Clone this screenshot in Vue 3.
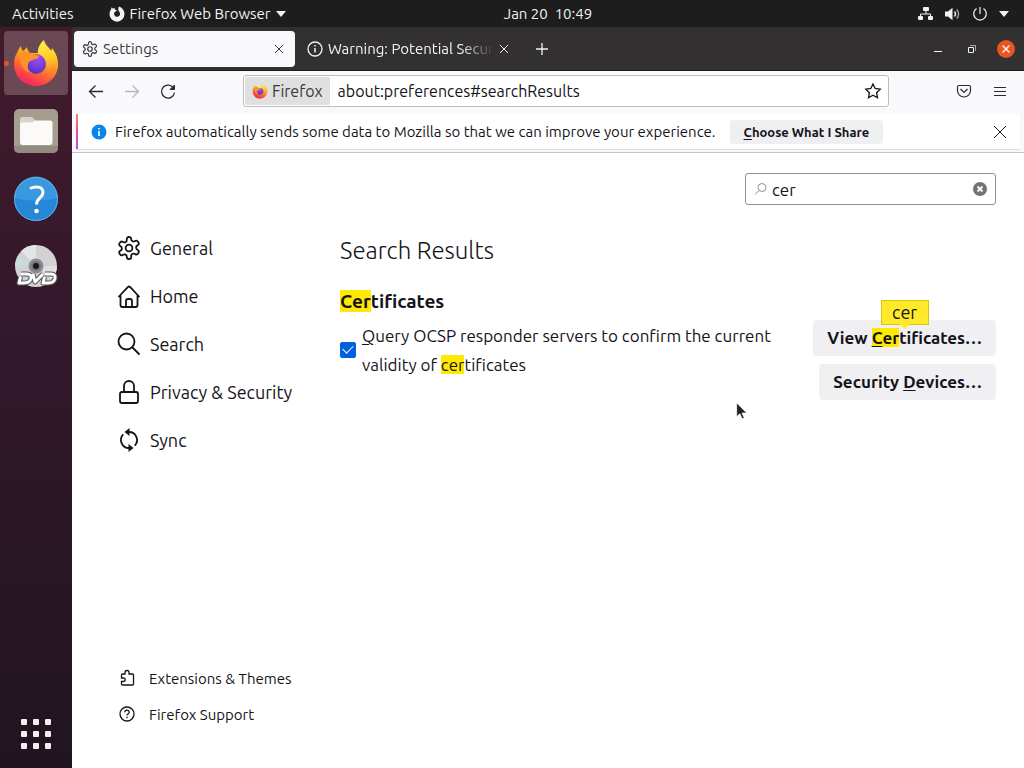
<template>
  <div class="desktop">
    <!-- Shared icon shapes -->
    <svg class="defs" width="0" height="0" aria-hidden="true">
      <defs>
        <linearGradient id="fx-body" x1="0.8" y1="0.1" x2="0.3" y2="1">
          <stop offset="0" stop-color="#ffe226" />
          <stop offset="0.35" stop-color="#ffa41c" />
          <stop offset="0.65" stop-color="#ff5a36" />
          <stop offset="1" stop-color="#f0206a" />
        </linearGradient>
        <linearGradient id="fx-flame" x1="0.5" y1="0" x2="0.6" y2="1">
          <stop offset="0" stop-color="#fff04a" />
          <stop offset="0.45" stop-color="#ffc928" />
          <stop offset="0.75" stop-color="#ff8a2a" />
          <stop offset="1" stop-color="#ff4f45" />
        </linearGradient>
        <radialGradient id="fx-globe" cx="0.6" cy="0.25" r="0.8">
          <stop offset="0" stop-color="#a04af0" />
          <stop offset="0.5" stop-color="#7a3fdc" />
          <stop offset="1" stop-color="#4a35b4" />
        </radialGradient>
        <symbol id="firefox" viewBox="0 0 48 48">
          <path fill="url(#fx-body)" d="M5 14C6 11 7 9 9 7c0 2 1 4 2 5 2-1 3-3 4-4 0 2 1 4 3 6h10l10-1c1-1 2-2 2-4 3 4 6 9 6 16 0 13-10 22-22 22S2 38 2 25c0-5 1-8 3-11z" />
          <path fill="url(#fx-flame)" d="M32 1c1 5 5 7 8 12l1-1c3 4 5 9 4 15-1 8-6 13-12 16 4-6 5-13 2-18-2-4-6-6-9-10-1-5 2-11 6-14z" />
          <circle cx="24" cy="25" r="10" fill="url(#fx-globe)" />
          <path fill="#ff9226" d="M7 14c4-3 9-2 13 1 2 1 5 0 7 2 0 2-3 3-6 4-3 1-5 2-5 5-1 4 1 7 5 8-8 0-13-6-14-20z" />
        </symbol>
        <symbol id="gear" viewBox="0 0 24 24">
          <path d="M12.22 1h-.44a2 2 0 0 0-2 2v1.180a2 2 0 0 1-1 1.730l-.43.250a2 2 0 0 1-2 0l-.6-.350a2 2 0 0 0-2.730.730l-.5.800a2 2 0 0 0 .730 2.730l.6.350a2 2 0 0 1 1 1.720v.510a2 2 0 0 1-1 1.740l-.6.340a2 2 0 0 0-.730 2.730l.5.800a2 2 0 0 0 2.730.730l.6-.350a2 2 0 0 1 2 0l.430.250a2 2 0 0 1 1 1.730V21a2 2 0 0 0 2 2h.440a2 2 0 0 0 2-2v-1.180a2 2 0 0 1 1-1.730l.430-.250a2 2 0 0 1 2 0l.6.350a2 2 0 0 0 2.730-.730l.5-.800a2 2 0 0 0-.730-2.730l-.6-.350a2 2 0 0 1-1-1.740v-.500a2 2 0 0 1 1-1.740l.6-.350a2 2 0 0 0 .730-2.730l-.5-.800a2 2 0 0 0-2.730-.730l-.6.350a2 2 0 0 1-2 0l-.430-.250a2 2 0 0 1-1-1.730V3a2 2 0 0 0-2-2z" />
          <circle cx="12" cy="12" r="3.4" />
        </symbol>
      </defs>
    </svg>

    <!-- System bar -->
    <header class="topbar">
      <div class="topbar-left">
        <button class="bar-button">Activities</button>
        <button class="bar-button app-menu">
          <svg width="16" height="16" viewBox="0 0 16 16">
            <path fill="#f2f2f2" d="M2 3.5 2.6 1.3 4 2.8 5.4 1.8 6 3.6l2 .9-1.800 1.300c-1 .6-1.200 1.200-1.100 2.200a3 3 0 1 0 5.200-2.200C9.500 4.800 8.800 3 9.800.4c3.400 1 5.700 4 5.700 7.600a7.500 7.500 0 1 1-15 .3C.5 6.300 1.200 4.700 2 3.500z" />
          </svg>
          <span>Firefox Web Browser</span>
          <svg width="10" height="6" viewBox="0 0 10 6"><path fill="#f2f2f2" d="M0 0h10L5 6z" /></svg>
        </button>
      </div>
      <button class="bar-button clock">Jan 20&nbsp; 10:49</button>
      <button class="bar-button status" aria-label="System menu">
        <svg width="16" height="14" viewBox="0 0 16 14">
          <rect x="5" y="0" width="6" height="4" rx="1" fill="#f2f2f2" />
          <rect x="0" y="9" width="5" height="4" rx="1" fill="#f2f2f2" />
          <rect x="10" y="9" width="5" height="4" rx="1" fill="#f2f2f2" />
          <path d="M8 4v3M2.500 9V7h10v2" fill="none" stroke="#f2f2f2" />
        </svg>
        <svg width="16" height="14" viewBox="0 0 16 14">
          <path fill="#f2f2f2" d="M0 4.500h3L7.500.7v12.600L3 9.500H0z" />
          <path d="M9.500 4.500c1.300 1.500 1.300 3.500 0 5" fill="none" stroke="#f2f2f2" stroke-width="1.300" />
          <path d="M11.700 2.500c2.500 2.600 2.500 6.400 0 9" fill="none" stroke="#a8a8a8" stroke-width="1.300" />
        </svg>
        <svg width="16" height="16" viewBox="0 0 16 16">
          <path d="M4.500 2.500a6.300 6.300 0 1 0 7 0M8 1v7" fill="none" stroke="#f2f2f2" stroke-width="1.200" />
        </svg>
        <svg width="10" height="6" viewBox="0 0 10 6"><path fill="#f2f2f2" d="M0 0h10L5 6z" /></svg>
      </button>
    </header>

    <div class="workspace">
      <!-- Dock -->
      <nav class="dock" aria-label="Dock">
        <button class="dock-item running" aria-label="Firefox">
          <svg width="48" height="48"><use href="#firefox" /></svg>
        </button>
        <button class="dock-item" aria-label="Files">
          <svg width="46" height="46" viewBox="0 0 46 46">
            <rect x="1" y="1" width="44" height="44" rx="5" fill="#a59d8f" />
            <path d="M1 38v2a5 5 0 0 0 5 5h34a5 5 0 0 0 5-5v-2" fill="#938b7d" />
            <path d="M7 16v-5q0-2 2-2h9q2 0 3 2l2 3h14q2 0 2 3v4H7z" fill="#d8d3ca" />
            <path d="M7 16q0-1.500 2-1.500h10l3-2h15q2.500 0 2.500 2.500v19q0 3-3 3h-27q-2.500 0-2.500-3z" fill="#fbfaf8" />
          </svg>
        </button>
        <button class="dock-item" aria-label="Help">
          <svg width="46" height="46" viewBox="0 0 46 46">
            <circle cx="23" cy="23" r="22" fill="#2587d6" />
            <path d="M1.500 22a21.500 21.500 0 0 1 43 0c-12 3-29 4-43 0z" fill="#3a98df" />
            <circle cx="23" cy="23" r="21.500" fill="none" stroke="#63b0e8" />
            <path d="M17 12.500c5-2.500 13-2.500 13 4 0 5-6.500 5.500-6.500 12" fill="none" stroke="#fff" stroke-width="3" />
            <circle cx="23.500" cy="35" r="2.300" fill="#fff" />
          </svg>
        </button>
        <button class="dock-item" aria-label="DVD drive">
          <svg width="46" height="46" viewBox="0 0 46 46">
            <circle cx="23" cy="22" r="21" fill="#d2d2d4" />
            <path d="M23 22 8 7A21 21 0 0 1 23 1z" fill="#e2e4e6" />
            <path d="M23 22 44 22a21 21 0 0 1-5 13z" fill="#e0dde3" />
            <path d="M23 22 2 22A21 21 0 0 1 5 12z" fill="#c9dcd8" />
            <circle cx="23" cy="22" r="7.500" fill="#8e8c8e" />
            <circle cx="23" cy="22" r="5" fill="#777477" />
            <circle cx="23" cy="22" r="3" fill="#1b1418" />
            <g fill="none" stroke-linejoin="round">
              <path d="M8 30h6q5 0 4 4.500T11 39H6l1.500-6M20 30l2 8 8-8M32 30h6q5 0 4 4.500T35 39h-5l1.500-6" stroke="#555" stroke-width="5" />
              <path d="M8 30h6q5 0 4 4.500T11 39H6l1.500-6M20 30l2 8 8-8M32 30h6q5 0 4 4.500T35 39h-5l1.500-6" stroke="#fff" stroke-width="3" />
            </g>
          </svg>
        </button>
        <button class="dock-item apps" aria-label="Show applications">
          <span v-for="n in 9" :key="n" class="dot"></span>
        </button>
      </nav>

      <!-- Browser window -->
      <div class="browser">
        <div class="tabstrip">
          <div class="tab active">
            <svg class="line-icon" width="16" height="16" stroke-width="1.800"><use href="#gear" /></svg>
            <span class="tab-title">Settings</span>
            <button class="tab-close" aria-label="Close tab">
              <svg class="line-icon" width="8" height="8" viewBox="0 0 8 8"><path d="m0 0 8 8M8 0 0 8" /></svg>
            </button>
          </div>
          <div class="tab">
            <svg class="line-icon" width="16" height="16" viewBox="0 0 16 16" stroke-width="1.300">
              <circle cx="8" cy="8" r="7" /><path d="M8 7v4.500M8 4v1.500" stroke-width="1.500" />
            </svg>
            <span class="tab-title faded">Warning: Potential Securi</span>
            <button class="tab-close" aria-label="Close tab">
              <svg class="line-icon" width="8" height="8" viewBox="0 0 8 8"><path d="m0 0 8 8M8 0 0 8" /></svg>
            </button>
          </div>
          <button class="new-tab" aria-label="New tab">
            <svg class="line-icon" width="12" height="12" viewBox="0 0 12 12"><path d="M6 0v12M0 6h12" stroke-width="1.300" /></svg>
          </button>
          <div class="window-buttons">
            <button aria-label="Minimize">
              <svg class="line-icon" width="8" height="8" viewBox="0 0 8 8"><path d="M0 6.500h8" /></svg>
            </button>
            <button aria-label="Restore">
              <svg class="line-icon" width="8" height="8" viewBox="0 0 8 8"><path d="M.5 2.500h5v5h-5z" /><path d="M2 .5h5.500V6" opacity=".6" /></svg>
            </button>
            <button class="window-close" aria-label="Close window">
              <svg class="line-icon" width="8" height="8" viewBox="0 0 8 8" stroke-width="1.500"><path d="m.5.5 7 7M7.500.5l-7 7" /></svg>
            </button>
          </div>
        </div>

        <div class="toolbar">
          <button class="tool" aria-label="Back">
            <svg class="line-icon" width="16" height="16" viewBox="0 0 16 16" stroke-width="1.300"><path d="M15 8.500H1.500M7.500 2.500l-6 6 6 6" /></svg>
          </button>
          <button class="tool" aria-label="Forward" disabled>
            <svg class="line-icon" width="16" height="16" viewBox="0 0 16 16" stroke-width="1.300"><path d="M1 8.500h13.500M8.500 2.500l6 6-6 6" /></svg>
          </button>
          <button class="tool" aria-label="Reload">
            <svg class="line-icon" width="16" height="16" viewBox="0 0 16 16" stroke-width="1.300">
              <path d="M13.800 5.500A6.500 6.500 0 1 0 14.500 9.500" /><path d="M14.500 2V6.500H10z" fill="currentColor" stroke-width="1" />
            </svg>
          </button>
          <div class="urlbar">
            <div class="identity">
              <svg width="16" height="16"><use href="#firefox" /></svg>
              <span>Firefox</span>
            </div>
            <input v-model="url" class="url-input" type="text" aria-label="Address" />
            <button class="star" aria-label="Bookmark this page">
              <svg class="line-icon" width="16" height="16" viewBox="0 0 16 16" stroke-width="1.300">
                <path d="m8 1 2.200 4.500 5 .7-3.600 3.500.9 5L8 12.300l-4.500 2.400.9-5L.8 6.200l5-.7z" />
              </svg>
            </button>
          </div>
          <button class="tool" aria-label="Save to Pocket">
            <svg class="line-icon" width="16" height="16" viewBox="0 0 16 16" stroke-width="1.200">
              <path d="M3 2.500h10q1.500 0 1.500 1.500v3.500a6.500 6.500 0 0 1-13 0V4q0-1.500 1.500-1.500z" /><path d="m4.500 6 3.500 3.500L11.500 6" />
            </svg>
          </button>
          <button class="tool" aria-label="Menu">
            <svg class="line-icon" width="12" height="12" viewBox="0 0 12 12" stroke-width="1.200"><path d="M0 2.500h12M0 6.500h12M0 10.500h12" /></svg>
          </button>
        </div>

        <div class="notice-area">
          <div class="notice">
            <svg width="16" height="16" viewBox="0 0 16 16">
              <circle cx="8" cy="8" r="7.500" fill="#0a84e8" />
              <path d="M8 7v5M8 4v1.600" stroke="#fff" stroke-width="1.600" />
            </svg>
            <span class="notice-text">Firefox automatically sends some data to Mozilla so that we can improve your experience.</span>
            <button class="share"><span><u>C</u>hoose What I Share</span></button>
            <button class="tool notice-close" aria-label="Close">
              <svg class="line-icon" width="12" height="12" viewBox="0 0 12 12"><path d="m0 0 12 12M12 0 0 12" /></svg>
            </button>
          </div>
        </div>

        <div class="page">
          <aside class="sidebar">
            <a v-for="item in categories" :key="item.name" href="#" class="category">
              <svg v-if="item.name === 'General'" class="line-icon" width="24" height="24" stroke-width="1.800"><use href="#gear" /></svg>
              <svg v-else class="line-icon" width="24" height="24" viewBox="0 0 24 24" stroke-width="1.800">
                <path :d="item.path" />
                <path v-if="item.solid" :d="item.solid" fill="currentColor" stroke="none" />
              </svg>
              <span>{{ item.name }}</span>
            </a>
            <div class="side-links">
              <a v-for="link in links" :key="link.name" href="#" class="side-link">
                <svg class="line-icon" width="16" height="16" viewBox="0 0 16 16" stroke-width="1.300"><path :d="link.path" /></svg>
                <span>{{ link.name }}</span>
              </a>
            </div>
          </aside>

          <main class="main">
            <div class="search-box">
              <svg class="line-icon" width="12" height="12" viewBox="0 0 12 12"><circle cx="7" cy="4.500" r="4" /><path d="M4 7.500 0 11.500" /></svg>
              <input v-model="query" class="search-input" type="text" aria-label="Find in Settings" />
              <button class="clear" aria-label="Clear" @click="query = ''">
                <svg width="14" height="14" viewBox="0 0 14 14"><circle cx="7" cy="7" r="7" fill="#737373" /><path d="m4.500 4.500 5 5m0-5-5 5" stroke="#fff" stroke-width="1.800" /></svg>
              </button>
            </div>
            <h1>Search Results</h1>
            <h2><mark>Cer</mark>tificates</h2>
            <div class="group">
              <div class="option">
                <input id="ocsp" v-model="ocsp" type="checkbox" />
                <label for="ocsp"><u>Q</u>uery OCSP responder servers to confirm the current validity of <mark>cer</mark>tificates</label>
              </div>
              <div class="actions">
                <button class="action">View <mark class="hit"><u>C</u>er<span v-if="query" class="tooltip">{{ query }}</span></mark>tificates…</button>
                <button class="action">Security <u>D</u>evices…</button>
              </div>
            </div>
          </main>
        </div>
      </div>
    </div>

    <!-- Mouse pointer -->
    <svg class="pointer" width="12" height="18" viewBox="0 0 12 18">
      <path d="M.6.8v14l3.200-3 2.300 5 2.200-1-2.300-4.700h4.800z" fill="#222" stroke="#fff" stroke-width=".8" />
    </svg>
  </div>
</template>

<script setup>
import { ref } from 'vue'

const url = ref('about:preferences#searchResults')
const query = ref('cer')
const ocsp = ref(true)

const categories = [
  { name: 'General' },
  {
    name: 'Home',
    path: 'M1.500 13 11 3q1-1 2 0l9.500 10M3.500 11.500V21q0 2 2 2h13q2 0 2-2v-9.500M9 23v-6q0-2 2-2h2q2 0 2 2v6'
  },
  { name: 'Search', path: 'M17.500 9.500a8 8 0 1 1-16 0 8 8 0 0 1 16 0M15.500 15.500l7 7' },
  {
    name: 'Privacy & Security',
    path: 'M5 12h14q2 0 2 2v7q0 2-2 2H5q-2 0-2-2v-7q0-2 2-2M7 12V6a5 5 0 0 1 10 0v6'
  },
  {
    name: 'Sync',
    path: 'M12.500 20A8 8 0 0 1 6.300 6.400M11.500 4A8 8 0 0 1 17.700 17.600',
    solid: 'M7.500 4 12.500 0v8zM16.500 20l-5 4v-8z'
  }
]

const links = [
  {
    name: 'Extensions & Themes',
    path: 'M2.500 5q0-1 1-1H6V2.500a2 2 0 0 1 4 0V4h3.500q1 0 1 1v9q0 1-1 1h-10q-1 0-1-1v-2.500H4.500a1.700 1.700 0 0 0 0-3.500H2.500z'
  },
  {
    name: 'Firefox Support',
    path: 'M15 8A7 7 0 1 1 1 8a7 7 0 0 1 14 0M5.800 6.200a2.200 2 0 1 1 3.400 1.600Q8 8.400 8 9.500M8 10.800v1.400'
  }
]
</script>

<style>
body {
  margin: 0;
}
</style>

<style scoped>
.desktop {
  position: relative;
  display: flex;
  flex-direction: column;
  min-height: 100vh;
  font-family: Ubuntu, "Noto Sans", sans-serif;
  font-size: 15px;
  color: #15141a;
}

.defs {
  position: absolute;
}

button,
input {
  font: inherit;
  color: inherit;
}

button {
  display: flex;
  align-items: center;
  justify-content: center;
  padding: 0;
  border: none;
  background: none;
}

svg {
  flex: none;
  display: block;
}

.line-icon {
  fill: none;
  stroke: currentColor;
  overflow: visible;
}

mark {
  background: #ffe900;
  color: inherit;
}

u {
  text-underline-offset: 2px;
}

/* System bar */
.topbar {
  display: grid;
  grid-template-columns: 75px 1fr auto 1fr;
  align-items: center;
  height: 27px;
  padding: 0 15px 0 12px;
  background: #1d1d1d;
  color: #f2f2f2;
}

.topbar-left {
  display: flex;
  grid-column: 1 / 3;
  gap: 35px;
}

.app-menu {
  gap: 5px;
}

.status {
  justify-self: end;
  gap: 11px;
}

.workspace {
  display: flex;
  flex: 1;
}

/* Dock */
.dock {
  display: flex;
  flex-direction: column;
  align-items: center;
  gap: 4px;
  width: 72px;
  box-sizing: border-box;
  padding: 4px 0 2px;
  background: linear-gradient(#421a2c, #34182b 40%, #20151f);
}

.dock-item {
  width: 64px;
  height: 64px;
  border-radius: 4px;
}

.dock-item.running {
  position: relative;
  background: #6a4954;
}

.dock-item.running::before {
  content: "";
  position: absolute;
  left: 0;
  width: 5px;
  height: 5px;
  border-radius: 50%;
  background: #e95420;
}

.apps {
  display: grid;
  grid-template-columns: repeat(3, 6px);
  gap: 6px;
  align-content: center;
  margin-top: auto;
}

.dot {
  width: 6px;
  height: 6px;
  border-radius: 1px;
  background: #f8ecf4;
}

/* Tabs */
.browser {
  display: flex;
  flex: 1;
  flex-direction: column;
  min-width: 0;
  background: #fff;
}

.tabstrip {
  display: flex;
  align-items: center;
  gap: 4px;
  height: 44px;
  box-sizing: border-box;
  padding: 0 9px 0 2px;
  border-bottom: 1px solid #1c1b1c;
  background: #323031;
  color: #f4f4f4;
}

.tab {
  display: flex;
  flex: 0 1 221px;
  align-items: center;
  gap: 5px;
  min-width: 0;
  height: 36px;
  box-sizing: border-box;
  padding: 0 6px 0 8px;
  border-radius: 4px;
}

.tab.active {
  background: #f9f9fb;
  color: #3a393d;
}

.tab-title {
  flex: 1;
  overflow: hidden;
  white-space: nowrap;
}

.faded {
  margin-right: -5px;
  mask-image: linear-gradient(to right, #000 80%, transparent);
}

.tab-close {
  width: 20px;
  height: 20px;
}

.new-tab {
  width: 36px;
  height: 36px;
}

.window-buttons {
  display: flex;
  align-items: center;
  gap: 16px;
  margin-left: auto;
}

.window-buttons button {
  width: 18px;
  height: 18px;
  border-radius: 50%;
}

.window-buttons .window-close {
  background: #e95420;
}

/* Toolbar */
.toolbar {
  display: flex;
  align-items: center;
  height: 40px;
  padding: 0 6px 2px;
  background: #f9f9fb;
  color: #2b2a33;
}

.tool {
  width: 36px;
  height: 36px;
}

.tool:disabled {
  color: #b8b8bb;
}

.urlbar {
  display: flex;
  flex: 1;
  align-items: center;
  height: 32px;
  box-sizing: border-box;
  margin: 0 57px;
  border: 1px solid #bdbdbf;
  border-radius: 3px;
  background: #fff;
  color: #15141a;
}

.identity {
  display: flex;
  align-items: center;
  gap: 4px;
  height: 28px;
  margin-left: 1px;
  padding: 0 7px;
  border-radius: 2px;
  background: #e0e0e1;
  color: #3a393d;
  font-size: 16px;
}

.url-input {
  flex: 1;
  min-width: 0;
  padding: 0 8px;
  border: none;
  outline: none;
  background: none;
  font-size: 16px;
}

.star {
  width: 30px;
  height: 30px;
}

/* Notification */
.notice-area {
  padding: 1px 4px 3px;
  border-bottom: 1px solid #c4c4c6;
  background: #f9f9fb;
}

.notice {
  display: flex;
  align-items: center;
  gap: 8px;
  height: 35px;
  padding-left: 13px;
  border-left: 2px solid;
  border-image: linear-gradient(#ff8a50, #e0559a, #9059ff) 1;
  background: #fff;
  box-shadow: 0 1px 1px #dededf;
}

.notice-text {
  white-space: nowrap;
}

.share {
  height: 24px;
  margin-left: 6px;
  padding: 0 14px;
  border-radius: 4px;
  background: #efeff1;
  font-size: 13px;
  font-weight: 700;
}

.notice-close {
  margin-left: auto;
  margin-right: 2px;
}

/* Settings page */
.page {
  display: flex;
  flex: 1;
  font-size: 17px;
}

.sidebar {
  display: flex;
  flex-direction: column;
  width: 268px;
  box-sizing: border-box;
  padding: 71px 0 36px 45px;
}

.category,
.side-link {
  display: flex;
  align-items: center;
  color: inherit;
  text-decoration: none;
}

.category {
  gap: 9px;
  height: 48px;
  font-size: 18px;
}

.side-links {
  margin-top: auto;
}

.side-link {
  gap: 14px;
  height: 36px;
  padding-left: 2px;
  font-size: 15px;
}

.main {
  flex: 1;
  min-width: 0;
  padding: 20px 28px 0 0;
}

.search-box {
  display: flex;
  align-items: center;
  width: 251px;
  height: 32px;
  box-sizing: border-box;
  margin-left: auto;
  padding: 0 8px 0 9px;
  border: 1px solid #8f8f9d;
  border-radius: 3px;
}

.search-box .line-icon {
  color: #8f8f9d;
}

.search-input {
  flex: 1;
  min-width: 0;
  padding: 0 5px;
  border: none;
  outline: none;
}

h1 {
  margin: 29px 0 0;
  font-size: 24px;
  font-weight: 300;
  line-height: 34px;
}

h2 {
  margin: 21px 0 0;
  font-size: 19px;
  font-weight: 700;
  line-height: 24px;
}

.group {
  display: flex;
  align-items: flex-start;
  gap: 8px;
  margin-top: 7px;
}

.option {
  display: flex;
  flex: 1;
  align-items: center;
  gap: 6px;
  padding-top: 1px;
  line-height: 29px;
}

.option input {
  display: flex;
  flex: none;
  justify-content: center;
  width: 16px;
  height: 16px;
  margin: 0;
  border: 1px solid #8f8f9d;
  border-radius: 2px;
  appearance: none;
}

.option input:checked {
  border-color: #0060df;
  background: #0060df;
}

.option input:checked::after {
  content: "";
  width: 5px;
  height: 9px;
  border: solid #fff;
  border-width: 0 1px 1px 0;
  transform: rotate(45deg);
}

.actions {
  display: flex;
  flex-direction: column;
  align-items: flex-end;
  gap: 8px;
}

.action {
  display: block;
  height: 36px;
  padding: 0 14px 2px;
  border-radius: 4px;
  background: #f0f0f2;
  font-weight: 700;
  white-space: nowrap;
}

.hit {
  position: relative;
}

.tooltip {
  position: absolute;
  bottom: 22px;
  left: 9px;
  width: 48px;
  height: 25px;
  box-sizing: border-box;
  border: 1px solid #d7c60a;
  background: #ffe929;
  font-size: 18px;
  font-weight: 400;
  line-height: 23px;
  text-align: center;
}

.tooltip::after {
  content: "";
  position: absolute;
  top: 23px;
  left: 18px;
  border: 5px solid transparent;
  border-top-color: #ffe929;
  border-bottom: none;
}

.pointer {
  position: absolute;
  top: 402px;
  left: 736px;
}
</style>
